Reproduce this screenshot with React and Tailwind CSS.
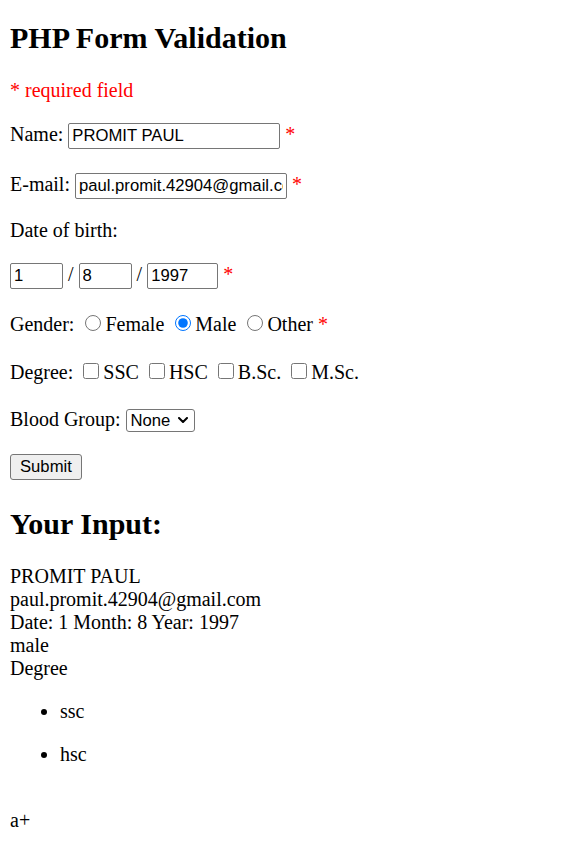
import React from 'react';

const field = "h-[26px] px-[3px] py-0 border border-[#767676] rounded-[2px] bg-white text-black font-['Liberation_Sans',Arial,sans-serif] text-[16.67px] leading-[20px] align-baseline";
const radio = "w-4 h-4 m-0 ml-[6px] mr-[4px] align-baseline";
const check = "w-4 h-4 m-0 ml-[5px] mr-[4px] align-baseline";

export default function App() {
  return (
    <div className="flex flex-col px-[10px] font-['Liberation_Serif','Times_New_Roman',serif] text-[20px] leading-[23px] text-black bg-white min-h-screen">
      <h2 className="mt-[20px] text-[30px] leading-[35px] font-bold">PHP Form Validation</h2>
      <p className="mt-[24px] h-[23px] text-[#ff0000]">* required field</p>

      <form className="flex flex-col" onSubmit={e => e.preventDefault()}>
        {/* Name */}
        <div className="mt-[21px] h-[26px] whitespace-nowrap">
          Name:{' '}
          <input type="text" readOnly defaultValue="PROMIT PAUL" className={`${field} w-[212px]`} />{' '}
          <span className="text-[#ff0000]">*</span>
        </div>

        {/* Email */}
        <div className="mt-[24px] h-[26px] whitespace-nowrap">
          E-mail:{' '}
          <input type="text" readOnly defaultValue="paul.promit.42904@gmail.com" className={`${field} w-[212px]`} />{' '}
          <span className="text-[#ff0000]">*</span>
        </div>

        <div className="mt-[20px] h-[23px]">Date of birth:</div>

        {/* Date */}
        <div className="mt-[21px] h-[26px] whitespace-nowrap">
          <input type="text" readOnly defaultValue="1" className={`${field} w-[53px]`} />
          {' / '}
          <input type="text" readOnly defaultValue="8" className={`${field} w-[53px]`} />
          {' / '}
          <input type="text" readOnly defaultValue="1997" className={`${field} w-[71px]`} />{' '}
          <span className="text-[#ff0000]">*</span>
        </div>

        {/* Gender */}
        <div className="mt-[24px] h-[23px] whitespace-nowrap">
          Gender:{' '}
          <input type="radio" name="gender" className={radio} />Female{' '}
          <input type="radio" name="gender" defaultChecked className={radio} />Male{' '}
          <input type="radio" name="gender" className={radio} />Other{' '}
          <span className="text-[#ff0000]">*</span>
        </div>

        {/* Degree */}
        <div className="mt-[25px] h-[23px] whitespace-nowrap">
          Degree:{' '}
          <input type="checkbox" className={check} />SSC{' '}
          <input type="checkbox" className={check} />HSC{' '}
          <input type="checkbox" className={check} />B.Sc.{' '}
          <input type="checkbox" className={check} />M.Sc.
        </div>

        {/* Blood group */}
        <div className="mt-[24px] h-[23px] whitespace-nowrap">
          Blood Group:{' '}
          <span className="relative inline-block align-baseline">
            <select className="appearance-none w-[69px] h-[23px] pl-[4px] pr-[20px] border border-[#767676] rounded-[3px] bg-white text-black font-['Liberation_Sans',Arial,sans-serif] text-[16.67px] leading-[21px]">
              <option>None</option>
            </select>
            <svg className="absolute right-[7px] top-[9px] pointer-events-none" width="10" height="6" viewBox="0 0 10 6" fill="none">
              <path d="M1 1l4 4 4-4" stroke="#000" strokeWidth="2" strokeLinecap="round" strokeLinejoin="round" />
            </svg>
          </span>
        </div>

        <div className="mt-[23px] h-[26px]">
          <button type="submit" className="h-[26px] px-[9px] border border-[#767676] rounded-[3px] bg-[#efefef] text-black font-['Liberation_Sans',Arial,sans-serif] text-[16.67px] leading-[20px]">
            Submit
          </button>
        </div>
      </form>

      <h2 className="mt-[26px] text-[30px] leading-[35px] font-bold">Your Input:</h2>

      <div className="mt-[24px]">
        PROMIT PAUL<br />
        paul.promit.42904@gmail.com<br />
        Date: 1 Month: 8 Year: 1997<br />
        male<br />
        Degree
      </div>

      <ul className="mt-[20px] list-disc pl-[50px]">
        <li className="h-[23px]">ssc</li>
        <li className="mt-[20px] h-[23px]">hsc</li>
      </ul>

      <div className="mt-[43px]">a+</div>
    </div>
  );
}
